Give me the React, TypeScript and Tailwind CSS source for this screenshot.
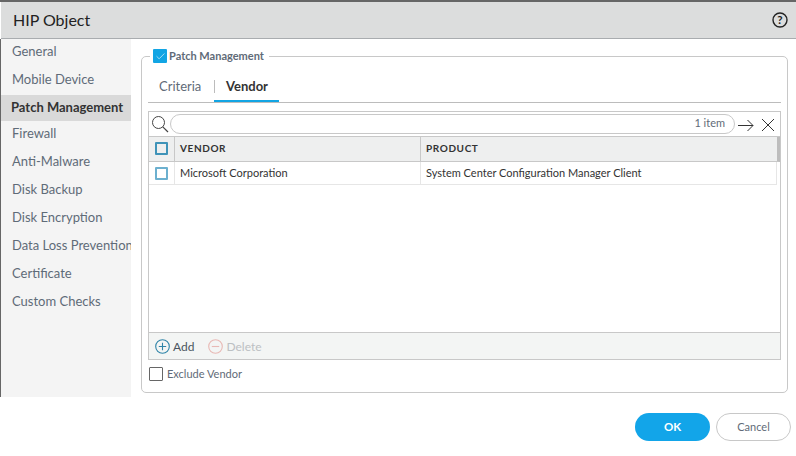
import React from 'react';
import { Check } from 'lucide-react';

const navItems = [
  'General',
  'Mobile Device',
  'Patch Management',
  'Firewall',
  'Anti-Malware',
  'Disk Backup',
  'Disk Encryption',
  'Data Loss Prevention',
  'Certificate',
  'Custom Checks',
];

const navClass = (index: number) => {
  if (index === 2) return "mt-px h-[26px] pl-[10px] flex items-center whitespace-nowrap text-[13px] font-bold text-[#333] bg-[#d9d9d9]";
  if (index === 3) return "-mt-px h-[28px] pl-[11px] flex items-center whitespace-nowrap text-[13px] text-[#5f6b78]";
  return "h-[28px] pl-[11px] flex items-center whitespace-nowrap text-[13px] text-[#5f6b78]";
};

const App: React.FC = () => {
  return (
    <div className="w-[796px] h-[456px] overflow-hidden bg-white flex flex-col font-['Lato','Noto_Sans',sans-serif] text-[#333]">
      <div className="h-[2px] bg-[#666]" />
      {/* Title bar */}
      <div className="h-[37px] shrink-0 ml-px flex items-center justify-between pl-[12px] pr-[8px] bg-[#dcdddd] border-b border-[#a9acaf]">
        <span className="text-[16px] text-[#222]">HIP Object</span>
        <svg width="16" height="16" viewBox="0 0 16 16" className="mb-px">
          <circle cx="8" cy="8" r="7" fill="none" stroke="#222" strokeWidth="1.4" />
          <text x="8" y="12" textAnchor="middle" fontSize="11.5" fontWeight="700" fill="#222" fontFamily="Lato, sans-serif">?</text>
        </svg>
      </div>

      <div className="flex h-[358px] shrink-0">
        {/* Sidebar */}
        <div className="w-[131px] shrink-0 border-l border-[#666] bg-[#f4f4f4] overflow-hidden">
          <div className="-mt-px">
            {navItems.map((item, index) => (
              <div key={item} className={navClass(index)}>
                {item}
              </div>
            ))}
          </div>
        </div>

        {/* Main panel */}
        <div className="flex-1 pl-[10px] pr-[8px] pt-[10px]">
          <fieldset className="h-[344px] border border-[#c8c8c8] rounded-[5px] pl-[6px] pr-[6px]">
            <legend className="ml-[2px] pl-[3px] pr-[5px] flex items-center gap-[2px] h-[14px] text-[11px] font-bold text-[#5f6b78]">
              <span className="w-[14px] h-[14px] bg-[#12a5e4] rounded-[1px] flex items-center justify-center">
                <Check size={11} strokeWidth={1.3} color="#fff" />
              </span>
              Patch Management
            </legend>

            {/* Tabs */}
            <div className="h-[40px] flex items-stretch border-b border-[#bcbcbc]">
              <div className="w-[66px] pl-[11px] pt-[14px] text-[13px] leading-[18px] text-[#5f6b78]">Criteria</div>
              <div className="w-[1px] h-[13px] mt-[17px] bg-[#bcbcbc]" />
              <div className="w-[65px] -ml-px pl-[12px] pt-[14px] text-[13px] leading-[18px] font-bold text-[#333] border-b-[2px] border-[#12a5e4]">Vendor</div>
            </div>

            {/* Table */}
            <div className="mt-[8px] h-[249px] border border-[#c8c8c8] flex flex-col">
              <div className="h-[25px] shrink-0 flex items-center pl-[2px] border-b border-[#c8c8c8]">
                <svg width="18" height="18" viewBox="0 0 18 18" className="shrink-0">
                  <circle cx="7.5" cy="7.5" r="6" fill="none" stroke="#444" strokeWidth="1" />
                  <path d="M11.8 11.8L17 17" stroke="#444" strokeWidth="1.2" />
                </svg>
                <div className="ml-[1px] w-[565px] h-[20px] pb-px border border-[#c8c8c8] rounded-full flex items-center justify-end pr-[9px] text-[11px] text-[#5f6b78]">
                  1 item
                </div>
                <svg width="16" height="13" viewBox="0 0 16 13" className="ml-[3px] mt-[3px] shrink-0">
                  <path d="M0 6.5H15M9.5 1L15 6.5L9.5 12" fill="none" stroke="#333" strokeWidth="1" />
                </svg>
                <svg width="14" height="14" viewBox="0 0 14 14" className="ml-[7px] mt-[2px] shrink-0">
                  <path d="M1 1L13 13M13 1L1 13" fill="none" stroke="#333" strokeWidth="1" />
                </svg>
              </div>

              <div className="h-[25px] shrink-0 flex bg-[#eeefef] border-b border-[#c8c8c8] border-r-[3px] border-r-[#bdbdbd] text-[10px] font-bold tracking-[0.6px] text-[#333]">
                <div className="w-[26px] pb-[2px] flex items-center justify-center border-r border-[#c8c8c8]">
                  <span className="w-[13px] h-[13px] border-[2px] border-[#3f93b8] rounded-[1px]" />
                </div>
                <div className="w-[246px] pl-[5px] pb-[2px] flex items-center border-r border-[#c8c8c8]">VENDOR</div>
                <div className="flex-1 pl-[5px] pb-[2px] flex items-center">PRODUCT</div>
              </div>

              <div className="h-[23px] shrink-0 flex mr-[3px] border-b border-r border-[#e6e6e6] text-[11px] text-[#333]">
                <div className="w-[26px] flex items-center justify-center border-r border-[#e6e6e6]">
                  <span className="w-[13px] h-[13px] border-[2px] border-[#6cb0cf] rounded-[1px]" />
                </div>
                <div className="w-[246px] pl-[5px] flex items-center border-r border-[#e6e6e6]">Microsoft Corporation</div>
                <div className="flex-1 pl-[5px] flex items-center">System Center Configuration Manager Client</div>
              </div>

              <div className="flex-1" />

              <div className="h-[27px] shrink-0 flex items-center pl-[6px] pt-px bg-[#f3f5f4] border-t border-[#c8c8c8] text-[12px]">
                <svg width="15" height="15" viewBox="0 0 15 15">
                  <circle cx="7.5" cy="7.5" r="6.8" fill="none" stroke="#2f84a8" strokeWidth="1.1" />
                  <path d="M7.5 3.8v7.4M3.8 7.5h7.4" stroke="#2f84a8" strokeWidth="1.1" />
                </svg>
                <span className="ml-[3px] text-[#4a5560]">Add</span>
                <svg width="15" height="15" viewBox="0 0 15 15" className="ml-[14px]">
                  <circle cx="7.5" cy="7.5" r="6.8" fill="none" stroke="#e8b9b5" strokeWidth="1.1" />
                  <path d="M3.8 7.5h7.4" stroke="#e8b9b5" strokeWidth="1.1" />
                </svg>
                <span className="ml-[3px] text-[#bcc0c3]">Delete</span>
              </div>
            </div>

            <div className="mt-[6px] ml-px flex items-center gap-[4px] text-[11px] text-[#5f6b78]">
              <span className="w-[14px] h-[14px] border border-[#666] rounded-[1px]" />
              Exclude Vendor
            </div>
          </fieldset>
        </div>
      </div>

      {/* Footer buttons */}
      <div className="flex justify-end gap-[6px] pr-[5px] pt-[16px]">
        <button className="w-[75px] h-[28px] rounded-full bg-[#12a5e9] text-white text-[11.5px] font-bold">OK</button>
        <button className="w-[75px] h-[28px] rounded-full bg-white border border-[#c8c8c8] text-[#5f6b78] text-[11px]">Cancel</button>
      </div>
    </div>
  );
};

export default App;
